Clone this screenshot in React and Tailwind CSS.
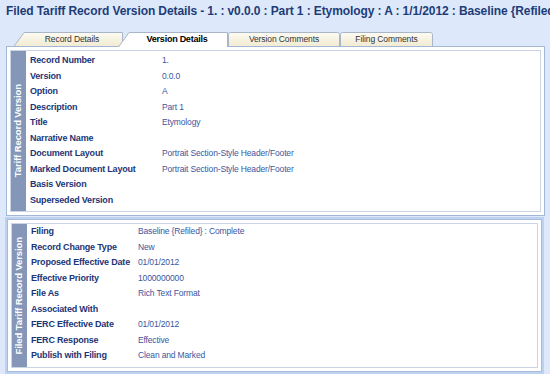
const versionRows = [
  ["Record Number", "1."],
  ["Version", "0.0.0"],
  ["Option", "A"],
  ["Description", "Part 1"],
  ["Title", "Etymology"],
  ["Narrative Name", ""],
  ["Document Layout", "Portrait Section-Style Header/Footer"],
  ["Marked Document Layout", "Portrait Section-Style Header/Footer"],
  ["Basis Version", ""],
  ["Superseded Version", ""],
];

const filedRows = [
  ["Filing", "Baseline {Refiled} : Complete"],
  ["Record Change Type", "New"],
  ["Proposed Effective Date", "01/01/2012"],
  ["Effective Priority", "1000000000"],
  ["File As", "Rich Text Format"],
  ["Associated With", ""],
  ["FERC Effective Date", "01/01/2012"],
  ["FERC Response", "Effective"],
  ["Publish with Filing", "Clean and Marked"],
];

const Tab = ({ label, active, slant, width, className = "" }) => (
  <div className={`relative h-[15px] ${active ? "z-10" : ""} ${className}`} style={{ width }}>
    <svg className="absolute inset-0" width={width} height="15" viewBox={`0 0 ${width} 15`}>
      <defs>
        <linearGradient id="tabg" x1="0" y1="0" x2="0" y2="1">
          <stop offset="0" stopColor="#fdfbf3" />
          <stop offset="1" stopColor="#f1ead0" />
        </linearGradient>
      </defs>
      {slant ? (
        <path
          d={`M0.5 15 L11 0.5 L${width - 0.5} 0.5 L${width - 0.5} 15`}
          fill={active ? "#ffffff" : "url(#tabg)"}
          stroke="#a9b6c8"
        />
      ) : (
        <path
          d={`M0.5 15 L0.5 2.5 Q0.5 0.5 2.5 0.5 L${width - 2.5} 0.5 Q${width - 0.5} 0.5 ${width - 0.5} 2.5 L${width - 0.5} 15`}
          fill={active ? "#ffffff" : "url(#tabg)"}
          stroke="#a9b6c8"
        />
      )}
      {!active && <line x1="0" y1="14.5" x2={width} y2="14.5" stroke="#a3b7d6" />}
    </svg>
    <span
      className={`relative flex h-full items-center justify-center whitespace-nowrap ${
        active
          ? "text-[9px] font-bold tracking-[-0.25px] text-black"
          : "text-[8.5px] tracking-[-0.1px] text-[#333]"
      } ${slant ? "pl-2" : ""}`}
    >
      {label}
    </span>
  </div>
);

const Section = ({ title, rows, valueX, className = "", bodyClass = "" }) => (
  <div className={`border border-[#a3b7d6] bg-white p-[3px] ${className}`}>
    <div className="flex border border-[#c9d4e4]">
      <div className="flex w-[15px] shrink-0 items-center justify-center bg-[#8497b8]">
        <span className="rotate-180 whitespace-nowrap text-[9.5px] font-bold tracking-[-0.1px] text-white [writing-mode:vertical-rl]">
          {title}
        </span>
      </div>
      <div className={`flex-1 pl-[4px] ${bodyClass}`}>
        {rows.map(([label, value]) => (
          <div key={label} className="flex h-[15.5px] items-center whitespace-nowrap">
            <div
              className="shrink-0 text-[9px] font-bold tracking-[-0.2px] text-[#1c3576]"
              style={{ width: valueX }}
            >
              {label}
            </div>
            <div className="text-[8.5px] tracking-[-0.15px] text-[#3a56a0]">{value}</div>
          </div>
        ))}
      </div>
    </div>
  </div>
);

export default function App() {
  return (
    <div className="h-[374px] w-[550px] overflow-hidden bg-[#dde9fa] font-['Liberation_Sans',Arial,sans-serif]">
      <div className="whitespace-nowrap pl-[6px] pt-[3px] text-[12px] font-bold leading-[16px] tracking-[-0.1px] text-[#1d3c78]">
        Filed Tariff Record Version Details - 1. : v0.0.0 : Part 1 : Etymology : A : 1/1/2012 : Baseline {"{Refiled} : Complete"}
      </div>
      <div className="relative z-10 -mb-px mt-[13px] flex pl-[13px]">
        <Tab label="Record Details" slant width={110} />
        <Tab label="Version Details" slant active width={110} className="-ml-[5px]" />
        <Tab label="Version Comments" width={112} />
        <Tab label="Filing Comments" width={93} />
      </div>
      <Section
        title="Tariff Record Version"
        rows={versionRows}
        valueX={132}
        className="ml-[6px] mr-[5px]"
        bodyClass="pt-[2px] pb-[3px]"
      />
      <div className="ml-[5px] mr-[6px] mt-[1px] border-2 border-[#bcd2f0]">
        <Section
          title="Filed Tariff Record Version"
          rows={filedRows}
          valueX={107}
          className="border-[#a9bcd9]"
          bodyClass="pb-[3px]"
        />
      </div>
    </div>
  );
}
